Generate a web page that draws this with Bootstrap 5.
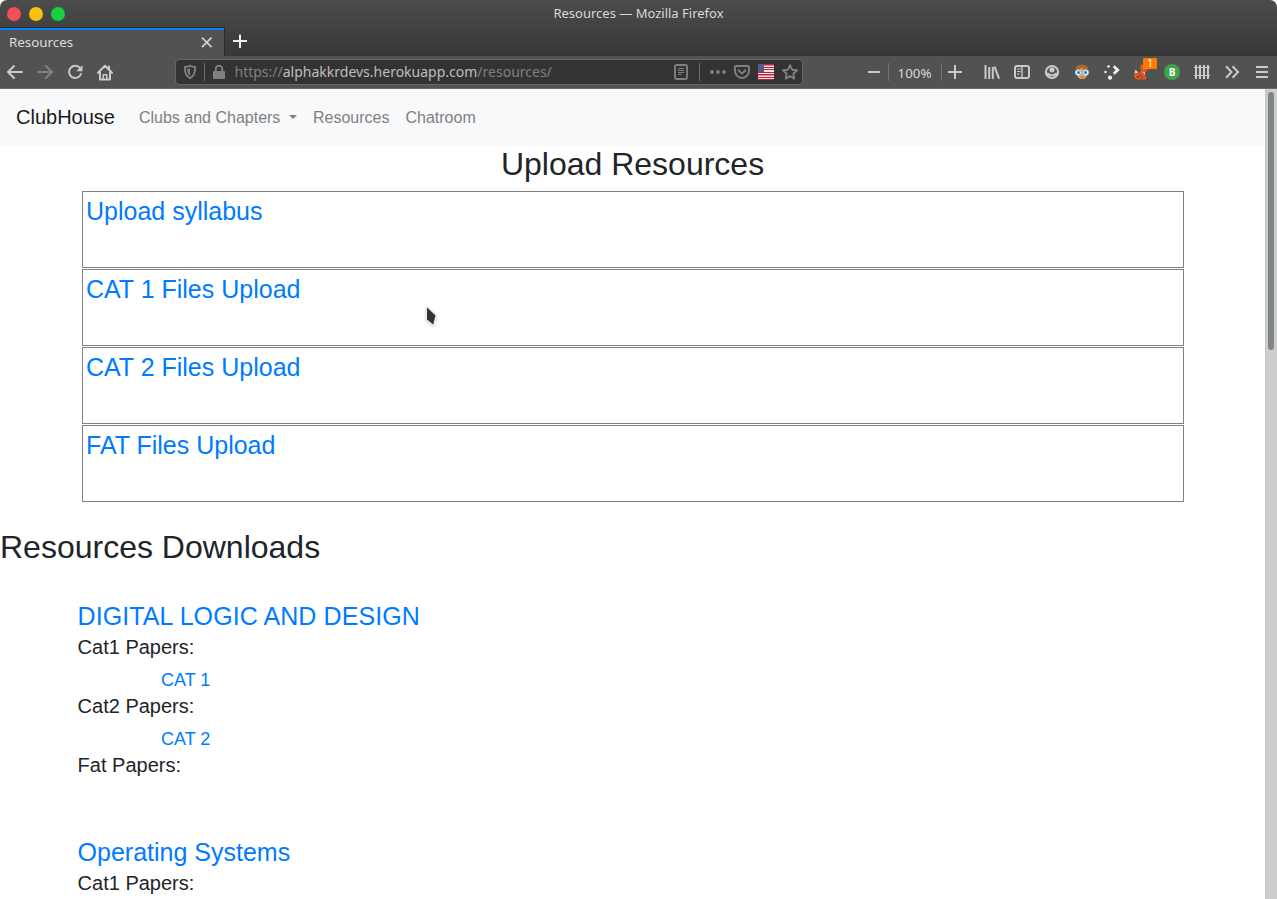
<!DOCTYPE html>
<html lang="en">
<head>
<meta charset="utf-8">
<title>Resources</title>
<meta name="viewport" content="width=device-width, initial-scale=1">
<link href="https://cdn.jsdelivr.net/npm/bootstrap@5.3.0/dist/css/bootstrap.min.css" rel="stylesheet">
<style>
  html, body { height: 100%; overflow: hidden; }
  body { font-family: "Liberation Sans", Arial, sans-serif; color: #212529; background: #fff; }
  a { color: #007bff; text-decoration: none; }
  svg { display: block; flex: none; }

  /* browser window frame */
  .chrome { font-family: "Noto Sans", sans-serif; font-size: 13.33px; color: #d9d9d9; background: linear-gradient(#4c4c4c, #373737 56px); border-radius: 7px 7px 0 0; }
  .corner-bg { background: #fff; }
  .titlebar { height: 27px; display: grid; grid-template-columns: 1fr auto 1fr; padding: 0 0 0 7px; }
  .window-title { margin-right: 7px; font-size: 13px; }
  .dot { width: 14px; height: 14px; border-radius: 50%; }
  .tabstrip { height: 29px; }
  .tab-current { width: 225px; height: 29px; background: #525252; border-top: 1px solid #2b2b2b; border-right: 1px solid #2b2b2b; box-shadow: inset 0 2px #0a7cf2; padding: 1px 9px 0; color: #dcdcdc; }
  .new-tab { width: 30px; }
  .toolbar { height: 33px; background: #525252; border-bottom: 1px solid #686868; color: #cacaca; }
  .tool { width: 30px; height: 32px; display: flex; align-items: center; justify-content: center; flex: none; }
  .urlbar { width: 628px; height: 26px; margin-left: 55px; background: #333; border: 1px solid #666; border-radius: 4px; color: #808080; font-size: 14px; }
  .urlbar .tool { height: 24px; }
  .urlbar .tool-sm { width: 24px; }
  .url-text { padding-left: 1.5px; margin-top: -1px; }
  .url-host { color: #bebebe; }
  .rule { width: 1px; height: 18px; background: #717171; flex: none; }
  .zoom-level { width: 52px; text-align: center; color: #d6d6d6; padding: 3px 1px 0 0; }
  .count-badge { position: absolute; left: 16px; top: 2px; width: 14px; height: 11px; background: #ff7a00; color: #fff; font-size: 10px; line-height: 11px; text-align: center; border-radius: 1px; }

  /* page */
  .viewport { height: calc(100% - 89px); }
  .site-nav { height: 56px; background: #f8f9fb; padding: 0 16px; }
  .site-nav .navbar-brand { color: #1a1a1a; margin-right: 16px; padding: 0; }
  .site-nav .nav-link { color: #808080; padding: 9px 8px 7px; }
  .site-nav .dropdown-toggle::after { margin-left: 8.6px; }
  .heading { font-size: 32px; line-height: 38.4px; font-weight: 400; margin: 0 0 8px; }
  .upload-list { width: 1102px; margin: 0 auto; display: grid; gap: 1px; position: relative; left: .5px; }
  .upload-box { height: 77px; border: 1px solid #808080; padding: 4px 3px; }
  .big-link { font-size: 25px; line-height: 30px; display: block; }
  .downloads { margin-top: 26px; }
  .course { margin-left: 77.6px; margin-bottom: 60px; }
  .course .big-link { margin-bottom: 4px; }
  .course .spaced { letter-spacing: .08px; }
  .paper-title { font-size: 20px; line-height: 24px; font-weight: 400; margin: 0 0 8px; }
  .paper-link { font-size: 18px; line-height: 27px; display: block; margin-left: 83.4px; }
  .scroll-track { width: 12px; background: #cdcdcd; border-left: 1px solid #c5c5c5; padding: 3px 3px 0 2px; }
  .scroll-thumb { width: 6px; height: 258px; background: #7f8583; border-radius: 3px; }
  .pointer { position: absolute; left: 424px; top: 304px; filter: drop-shadow(0 1px 1px #0003); }
</style>
</head>
<body>
<div class="corner-bg">
<header class="chrome">
  <div class="titlebar align-items-center">
    <div class="d-flex gap-2">
      <span class="dot" style="background:#f25056"></span>
      <span class="dot" style="background:#fac010"></span>
      <span class="dot" style="background:#14d13c"></span>
    </div>
    <div class="window-title">Resources — Mozilla Firefox</div>
    <div></div>
  </div>
  <div class="tabstrip d-flex">
    <div class="tab-current d-flex align-items-center justify-content-between">
      <span>Resources</span>
      <svg width="16" height="16" viewBox="0 0 16 16" fill="none" stroke="#d0d0d0" stroke-width="1.700"><path d="M3 2.700l9.500 9.500M12.500 2.700L3 12.200"/></svg>
    </div>
    <div class="new-tab d-flex align-items-center justify-content-center">
      <svg width="16" height="16" viewBox="0 0 16 16" fill="none" stroke="#eee" stroke-width="2"><path d="M8 .5v13.500M1 7h14"/></svg>
    </div>
  </div>
  <div class="toolbar d-flex align-items-center">
    <div class="tool"><svg width="18" height="16" viewBox="0 0 18 16" fill="none" stroke="#cacaca" stroke-width="2" stroke-linecap="round" stroke-linejoin="round"><path d="M8 2L2 8l6 6M2 8h14"/></svg></div>
    <div class="tool"><svg width="18" height="16" viewBox="0 0 18 16" fill="none" stroke="#818181" stroke-width="2" stroke-linecap="round" stroke-linejoin="round"><path d="M10 2l6 6-6 6M16 8H2"/></svg></div>
    <div class="tool"><svg width="16" height="16" viewBox="0 0 16 16"><path d="M13 4.200A6.100 6.100 0 1 0 13.900 10" fill="none" stroke="#cacaca" stroke-width="2" stroke-linecap="round"/><path d="M15.500 1v6.200H9.300z" fill="#cacaca"/></svg></div>
    <div class="tool"><svg width="18" height="17" viewBox="0 0 18 17" fill="none" stroke="#cacaca" stroke-width="2" stroke-linejoin="round" stroke-linecap="round"><path d="M2 8.700l7-7 7 7M4 8v7.500h10V8M13 2.500v3"/><path d="M7.200 15v-4.300h3.600V15" stroke-width="1.500"/></svg></div>

    <div class="urlbar d-flex align-items-center">
      <div class="tool" style="width:28px"><svg width="14" height="16" viewBox="0 0 14 16"><path d="M7 1.700c1.500.9 3.300 1.200 5.200 1.200 0 5.800-1 9.200-5.200 11.300C2.800 12.100 1.800 8.700 1.800 2.900 3.700 2.900 5.500 2.600 7 1.700z" fill="none" stroke="#808080" stroke-width="1.900" stroke-linejoin="round"/><path d="M7 4.300v7.400C5 10.300 4.300 8.300 4.200 5.100 5.200 5 6.200 4.800 7 4.300z" fill="#808080"/></svg></div>
      <div class="rule"></div>
      <div class="tool" style="width:28px"><svg width="14" height="16" viewBox="0 0 14 16"><rect x="1" y="7" width="12" height="8" rx="1" fill="#808080"/><path d="M3.800 8V5a3.200 3.200 0 0 1 6.400 0v3" fill="none" stroke="#808080" stroke-width="1.900"/></svg></div>
      <div class="url-text flex-grow-1">https://<span class="url-host">alphakkrdevs.herokuapp.com</span>/resources/</div>
      <div class="tool" style="width:37px"><svg width="16" height="16" viewBox="0 0 16 16" fill="none" stroke="#808080"><rect x="2" y="1" width="12" height="14" rx="1.500" stroke-width="1.900"/><path d="M5 4.500h6M5 6.500h6M5 8.500h6M5 10.500h3.500"/></svg></div>
      <div class="rule"></div>
      <div class="tool tool-sm" style="margin-left:6px"><svg width="16" height="16" viewBox="0 0 16 16" fill="#808080"><circle cx="2" cy="8" r="1.900"/><circle cx="8" cy="8" r="1.900"/><circle cx="14" cy="8" r="1.900"/></svg></div>
      <div class="tool tool-sm"><svg width="16" height="16" viewBox="0 0 16 16" fill="none" stroke="#808080" stroke-width="1.900" stroke-linecap="round" stroke-linejoin="round"><path d="M2 2h12q1 0 1 1v4a7 7 0 0 1-14 0V3q0-1 1-1zM4.500 6.300L8 9.600l3.500-3.300"/></svg></div>
      <div class="tool tool-sm"><svg width="16" height="16" viewBox="0 0 16 16" shape-rendering="crispEdges"><path fill="#f2e6e8" d="M0 0h16v16H0z"/><path d="M0 .5h16M0 3.500h16M0 5.500h16M0 8.500h16M0 10.500h16M0 13.500h16M0 15.500h16" stroke="#bd2138" stroke-width="1"/><path d="M0 1.500h16M0 11.500h16" stroke="#db8793"/><path fill="#56598a" d="M0 0h6v8H0z"/></svg></div>
      <div class="tool tool-sm"><svg width="16" height="16" viewBox="0 0 16 16" fill="none" stroke="#808080" stroke-width="1.900" stroke-linejoin="round"><path d="M8 1.200l2.100 4.500 4.900.6-3.600 3.400.9 4.900L8 12.200l-4.300 2.400.9-4.900L1 6.300l4.900-.6z"/></svg></div>
    </div>

    <div class="tool" style="margin-left:56px;width:29px"><svg width="12" height="16" viewBox="0 0 12 16"><path d="M0 8h12" stroke="#cacaca" stroke-width="2"/></svg></div>
    <div class="rule"></div>
    <div class="zoom-level">100%</div>
    <div class="rule"></div>
    <div class="tool" style="width:26px"><svg width="14" height="16" viewBox="0 0 14 16"><path d="M0 8h14M7 1v14" stroke="#cacaca" stroke-width="2"/></svg></div>
    <div class="tool ms-auto"><svg width="16" height="16" viewBox="0 0 16 16" fill="none" stroke="#cacaca" stroke-width="2"><path d="M1.500 1v14M5.200 3v12M8.800 3v12"/><path d="M10.500 2.500L15.100 14.600"/></svg></div>
    <div class="tool"><svg width="16" height="16" viewBox="0 0 16 16" fill="none" stroke="#cacaca"><rect x="1" y="2" width="14" height="12" rx="2" stroke-width="2"/><path d="M8 2v12" stroke-width="1.400"/><path d="M3 5h3.500M3 7.500h3.500M3 10h2.500"/></svg></div>
    <div class="tool"><svg width="16" height="16" viewBox="0 0 16 16"><circle cx="8" cy="8" r="6.100" fill="none" stroke="#cacaca" stroke-width="2"/><circle cx="8" cy="5.800" r="2.600" fill="#cacaca"/><path d="M1.500 8.800h3Q8 12.200 11.500 8.800h3A6.500 6.500 0 0 1 8 12.200 6.500 6.500 0 0 1 1.500 8.800z" fill="#cacaca"/></svg></div>
    <div class="tool"><svg width="16" height="16" viewBox="0 0 16 16"><path d="M1.500 10V6C1.500 2 4 .8 8 .8s6.500 1.700 6.500 5.500V10z" fill="#a9682c"/><path d="M3 7c2-.3 3.500-1.500 4.500-3.500C9 5.500 11 6 13 6.500V10c0 3-2 5-5 5s-5-2-5-5z" fill="#e5a062"/><circle cx="4.200" cy="8.600" r="2.800" fill="#fff" stroke="#8acbf0" stroke-width="1"/><circle cx="11.800" cy="8.600" r="2.800" fill="#fff" stroke="#8acbf0" stroke-width="1"/><circle cx="4.500" cy="8.600" r="1.500" fill="#2479b5"/><circle cx="11.500" cy="8.600" r="1.500" fill="#2479b5"/><path d="M6.500 13h3" stroke="#c65f39"/></svg></div>
    <div class="tool"><svg width="18" height="18" viewBox="0 0 18 18" fill="#f1f1f1"><circle cx="2.500" cy="9" r="1.200"/><circle cx="5.500" cy="3.500" r="1.300"/><circle cx="7" cy="14.700" r="2.100"/><path d="M10.700 3.200l4 3.800-4 3.800" fill="none" stroke="#f1f1f1" stroke-width="2.800"/></svg></div>
    <div class="tool position-relative"><svg width="18" height="18" viewBox="0 0 18 18"><path d="M7 4l1.500-3 3 2.500L16 5l-2.500 3.500-2 1c1 2 2 4 1.500 7H6c-3 0-5.500-2-5-4.500.3-2 1.500-3 1.300-5C5 8 5.500 9.500 5.700 11 6.500 9 8 8.500 8 7z" fill="#dc5825"/><path d="M2.200 7C4 8 4.700 9 4.800 10L1.600 10z" fill="#f3d5c5"/><path d="M10 8.500l2 1-.5 2.500z" fill="#f7dfd2"/><path d="M3.500 14c2 .5 3.500-.5 4-2.500M8 16c1-1 1.200-2 1-3.500" stroke="#892b16" fill="none"/></svg><span class="count-badge">1</span></div>
    <div class="tool"><svg width="16" height="16" viewBox="0 0 16 16"><circle cx="8" cy="8" r="8" fill="#3fa348"/><text x="8" y="11.600" text-anchor="middle" font-family="Open Sans, sans-serif" font-size="10" font-weight="700" fill="#fff">B</text></svg></div>
    <div class="tool"><svg width="16" height="16" viewBox="0 0 16 16" fill="none" stroke="#cacaca"><path d="M2 1v14M6 1v14M10 1v14M14 1v14" stroke-width="2"/><path d="M0 3.500h16M0 11.500h16" stroke-width="1"/></svg></div>
    <div class="tool"><svg width="16" height="16" viewBox="0 0 16 16" fill="none" stroke="#cacaca" stroke-width="2"><path d="M2 2.300L7.500 8 2 13.700M8.500 2.300L14 8l-5.500 5.700"/></svg></div>
    <div class="tool"><svg width="12" height="16" viewBox="0 0 12 16"><path d="M0 3h12M0 8h12M0 13h12" stroke="#cacaca" stroke-width="2"/></svg></div>
  </div>
</header>
</div>

<div class="viewport d-flex">
  <main class="flex-grow-1 overflow-hidden">
    <nav class="site-nav navbar navbar-expand d-flex justify-content-start">
      <a class="navbar-brand" href="#">ClubHouse</a>
      <div class="navbar-nav">
        <a class="nav-link dropdown-toggle" href="#">Clubs and Chapters</a>
        <a class="nav-link" href="#">Resources</a>
        <a class="nav-link" href="#">Chatroom</a>
      </div>
    </nav>
    <h2 class="heading text-center">Upload Resources</h2>
    <div class="upload-list">
      <div class="upload-box"><a class="big-link" href="#">Upload syllabus</a></div>
      <div class="upload-box"><a class="big-link" href="#">CAT 1 Files Upload</a></div>
      <div class="upload-box"><a class="big-link" href="#">CAT 2 Files Upload</a></div>
      <div class="upload-box"><a class="big-link" href="#">FAT Files Upload</a></div>
    </div>
    <section class="downloads">
      <h2 class="heading" style="margin-bottom:34px">Resources Downloads</h2>
      <div class="course">
        <a class="big-link spaced" href="#">DIGITAL LOGIC AND DESIGN</a>
        <h5 class="paper-title">Cat1 Papers:</h5>
        <a class="paper-link" href="#">CAT 1</a>
        <h5 class="paper-title">Cat2 Papers:</h5>
        <a class="paper-link" href="#">CAT 2</a>
        <h5 class="paper-title mb-0">Fat Papers:</h5>
      </div>
      <div class="course">
        <a class="big-link" href="#">Operating Systems</a>
        <h5 class="paper-title">Cat1 Papers:</h5>
      </div>
    </section>
  </main>
  <div class="scroll-track"><div class="scroll-thumb"></div></div>
</div>
<svg class="pointer" width="16" height="24" viewBox="0 0 16 24"><path d="M3 3.500l8.500 8-2.300 9L3 15.500z" fill="#333" stroke="#eee" stroke-width="2.500" stroke-linejoin="round" paint-order="stroke"/></svg>
<script src="https://cdn.jsdelivr.net/npm/bootstrap@5.3.0/dist/js/bootstrap.bundle.min.js"></script>
</body>
</html>
